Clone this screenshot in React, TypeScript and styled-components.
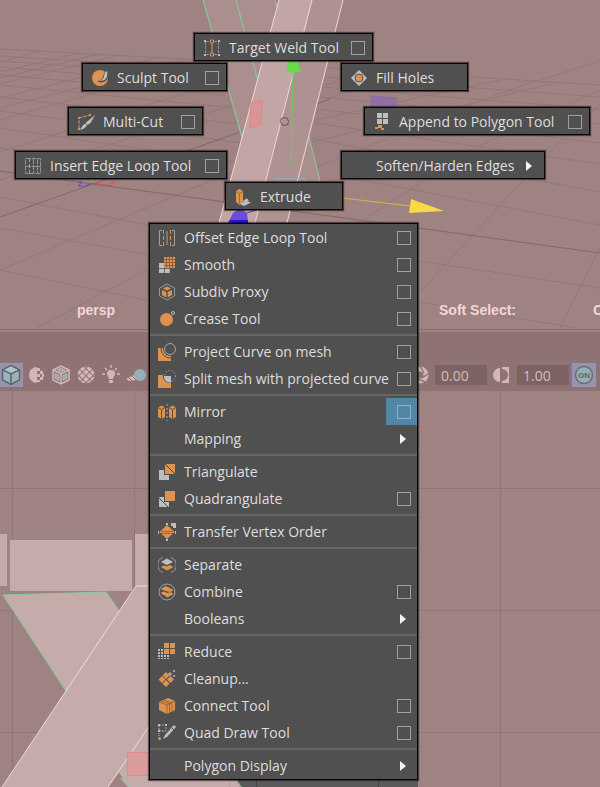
import React from "react";
import styled, { createGlobalStyle, css } from "styled-components";

const O = "#dd9350";
const G = "#bebebe";
const D = "#4f4f4f";
const PINK = "#d3b7b8";
const TEAL = "#93b0b6";
const TB = "#8f7374";

const GlobalStyle = createGlobalStyle`
  *, *::before, *::after { box-sizing: border-box; }
  body { margin: 0; background: #9f8282; font-family: "Open Sans", "Noto Sans", sans-serif; font-size: 14px; }
  button, input { font: inherit; color: inherit; }
`;

const Shell = styled.main`
  position: relative;
  display: flex;
  flex-direction: column;
  min-height: 100vh;
  overflow: hidden;
`;

const Pane = styled.section<{ $tall?: boolean }>`
  position: relative;
  display: flex;
  flex-direction: column;
  justify-content: flex-end;
  overflow: hidden;
  background: #9f8282;
  ${(p) => (p.$tall ? css`flex: 0 0 329px;` : css`flex: 1 0 396px;`)}
`;

const Scene = styled.svg`
  position: absolute;
  inset: 0;
  width: 100%;
  height: 100%;
`;

const Hud = styled.div`
  position: relative;
  display: grid;
  grid-template-columns: 362px 154px auto;
  padding: 0 0 10px 77px;
  font: bold 14px/18px "Liberation Sans", Arial, sans-serif;
  color: #f3d6d8;
  white-space: nowrap;
`;

const Toolbar = styled.header`
  flex: none;
  display: flex;
  align-items: flex-end;
  justify-content: space-between;
  height: 62px;
  padding: 0 4px 4px 0;
  background: ${TB};
  border-top: 1px solid #8a6d6e;
  box-shadow: inset 0 2px 0 #a08384;
`;

const ToolGroup = styled.div`
  display: flex;
  flex: none;
  align-items: center;
  gap: 1px;
`;

const ToolButton = styled.button<{ $on?: boolean }>`
  display: grid;
  place-items: center;
  flex: none;
  width: 24px;
  height: 24px;
  padding: 0;
  border: 0;
  background: ${(p) => (p.$on ? "#9494ae" : "transparent")};
  &:first-child { margin-left: -1px; }
`;

const Field = styled.input`
  width: 52px;
  height: 20px;
  margin: 0 2px;
  padding: 0 6px;
  border: 0;
  background: #7d6364;
  color: #d6babb;
`;

const Overlay = styled.nav`
  position: absolute;
  inset: 0;
`;

const panel = css`
  background: #505050;
  border: 1px solid #060606;
  box-shadow: 0 0 1px 1px rgba(20, 8, 8, 0.55);
  color: #dedede;
`;

const Pill = styled.div<{ $x: number; $y: number; $w: number }>`
  ${panel}
  position: absolute;
  left: ${(p) => p.$x}px;
  top: ${(p) => p.$y}px;
  width: ${(p) => p.$w}px;
  display: flex;
  height: 28px;
  padding: 1px 1px 0 0;
`;

const Menu = styled.div`
  ${panel}
  position: absolute;
  left: 149px;
  top: 223px;
  width: 269px;
`;

const Row = styled.div`
  display: flex;
  height: 27px;
`;

const Separator = styled.hr`
  height: 2px;
  margin: 2px 0;
  border: 0;
  background: #666666;
`;

const Command = styled.button`
  flex: 1;
  display: flex;
  align-items: center;
  gap: 8px;
  min-width: 0;
  padding: 0 0 0 8px;
  border: 0;
  background: transparent;
  line-height: 20px;
  text-align: left;
  white-space: nowrap;
`;

const IconSlot = styled.svg`
  flex: none;
  width: 18px;
  height: 18px;
`;

const Arrow = styled.svg`
  width: 6px;
  height: 10px;
  margin: 0 11px 0 auto;
`;

const OptionButton = styled.button<{ $active?: boolean }>`
  display: flex;
  align-items: center;
  justify-content: flex-end;
  flex: none;
  width: 31px;
  padding: 0 6px 0 0;
  border: 0;
  background: ${(p) => (p.$active ? "#5285a6" : "transparent")};
  &::before {
    content: "";
    width: 14px;
    height: 14px;
    border: 1px solid ${(p) => (p.$active ? "#8fb4cb" : "#a0a0a0")};
  }
`;

const icons: Record<string, React.ReactNode> = {
  weld: (
    <g fill="none">
      <path d="M2.500 3v12M15.500 3v12M3 2.500h12M3 15.500h12" stroke="#8f8f8f" strokeDasharray="3 1" />
      <path d="M1 1h2v2H1zM15 1h2v2h-2zM1 15h2v2H1zM15 15h2v2h-2z" fill={G} />
      <path d="M9 3v12" stroke={O} />
      <path d="M7.500 1h3v3h-3zM7.500 14h3v3h-3z" stroke={O} fill={D} />
    </g>
  ),
  sculpt: (
    <g>
      <circle cx="9" cy="9" r="8" fill={O} />
      <path d="M17 2c-4 0-4 3-5 6-1 2-3 4-6 4 4 3 9 1 11-3z" fill={D} />
      <path d="M16.500 2c-3 1-3 3-3.500 5.500-.6 2-2 3.500-4.500 4.200 4 .6 6.500-1.500 7.500-4z" fill={G} />
    </g>
  ),
  cut: (
    <g>
      <path d="M2 16V5l11-3" fill="none" stroke={O} strokeDasharray="4 1" />
      <path d="M1 4h2v2H1zM12 1h2v2h-2zM1 15h2v2H1z" fill={O} />
      <path d="M18 2l-4.500 8-3 2-2-2z" fill={G} />
      <path d="M8 10.500l2 2c-1.500 2-3.500 3.500-7 4.500 1.500-3 3-5 5-6.500z" fill={G} />
    </g>
  ),
  insertLoop: (
    <g fill="none" stroke="#929292">
      <path d="M1.500 1.500h15v15h-15zM9.500 2v14M13.500 2v14M2 9.500h15" strokeDasharray="5 1" />
      <path d="M5.500 1v16" stroke={O} strokeDasharray="4 2" />
    </g>
  ),
  fill: (
    <g>
      <path d="M9 1l8 8-8 8-8-8z" fill={G} />
      <circle cx="9" cy="9" r="4" fill={O} stroke={D} />
    </g>
  ),
  append: (
    <g>
      <path d="M4 0h5v5H4zM10 0h5v5h-5zM4 6h5v5H4zM10 6h5v5h-5z" fill={G} />
      <path d="M5 12h4v3H5zM2 14h3v2H2zM8 15h3v2H8z" fill={O} />
    </g>
  ),
  extrude: (
    <g>
      <path d="M6 16l5-3.500 6 2-7 3.500zM9 12.500l4-2 2 2-3 1z" fill={G} />
      <path d="M2 3l3.500-2L9 3v11l-3.500 3L2 14z" fill={O} />
      <path d="M2 3.500l3.500 2L9 3.500M5.500 5.500V16" fill="none" stroke="#8f623b" strokeWidth=".8" />
    </g>
  ),
  offset: (
    <g fill="none" stroke="#a2a2a2">
      <path d="M4 1.500H1.500v15H4M14 1.500h2.500v15H14M9 2v14" />
      <path d="M5.500 1v16M12.500 1v16" stroke={O} strokeDasharray="4 2" />
    </g>
  ),
  smooth: (
    <g>
      <path d="M6 1h11v11H6z" fill={O} />
      <path d="M8.500 1v11M11.500 1v11M14.500 1v11M6 3.500h11M6 6.500h11M6 9.500h11" stroke="#70502f" strokeWidth=".7" />
      <path d="M1 7h5v5H1zM1 12.800h5V17H1zM6.800 12.800h5V17h-5z" fill={G} />
    </g>
  ),
  subdiv: (
    <g>
      <path d="M9 1l7.500 4v8L9 17l-7.500-4V5z" fill="none" stroke="#999" />
      <path d="M9 3.500l4 2-4 2-4-2zM4 7l4.300 2v5.500L4 12zM14 7L9.700 9v5.500L14 12z" fill={O} />
    </g>
  ),
  crease: (
    <g>
      <circle cx="8.500" cy="9.500" r="6.500" fill={O} />
      <circle cx="15" cy="3" r="1.500" fill="none" stroke={G} />
    </g>
  ),
  project: (
    <g fill="none">
      <path d="M0 5h5a7 7 0 0 0 8 8v5H0z" fill={O} />
      <path d="M3 5c0 6 4 10 10 10M6 5a6 6 0 0 0 7 7.500" stroke={D} />
      <path d="M4.500 5c0 5 3 8.500 8.500 8.500" stroke={O} />
      <circle cx="12" cy="6" r="5.500" stroke="#a5a5a5" />
    </g>
  ),
  split: (
    <g>
      <path d="M0 5h5a7 7 0 0 0 8 8v5H0z" fill={O} />
      <path d="M6 6h7v6.500A6 6 0 0 1 6 6z" fill={G} />
      <circle cx="12" cy="6" r="5.500" fill="none" stroke={G} strokeDasharray="1 2" />
    </g>
  ),
  mirror: (
    <g>
      <path d="M0 4.500l3.500-2 3.500 2v9.500l-3.500 2L0 14zM11 4.500l3.500-2 3.500 2v9.500l-3.500 2L11 14z" fill={O} />
      <path d="M0 4.500l3.500 2 3.500-2M3.500 7v9M11 4.500l3.500 2 3.500-2M14.500 7v9" stroke="#6b4c31" fill="none" />
      <path d="M9 1v17" stroke="#aaa" strokeDasharray="2 2" />
    </g>
  ),
  tri: (
    <g>
      <path d="M1 7h5v5h5v5H1z" fill={G} />
      <path d="M7 1h10v10H7z" fill={O} />
      <path d="M7 1l10 10" stroke="#5a4029" />
    </g>
  ),
  quad: (
    <g>
      <path d="M1 7h5v5h5v5H1z" fill={G} />
      <path d="M1 8l9 9" stroke={D} />
      <path d="M7 1h10v10H7z" fill={O} />
    </g>
  ),
  transfer: (
    <g>
      <path d="M9 2l7.500 7L9 16 1.500 9z" fill={O} />
      <path d="M3 8.500h12M3 10.500h12" stroke="#8a5c37" strokeWidth=".8" />
      <path d="M8 0h2v2H8zM0 8h1v3H0zM17 8h1v3h-1zM8 16h2v2H8z" fill={G} />
      <path d="M13 0h5v5h-3V3h-2z" fill={G} />
    </g>
  ),
  separate: (
    <g>
      <path d="M5 1.500a8 8 0 0 0 0 15M13 1.500a8 8 0 0 1 0 15" fill="none" stroke="#a0a0a0" />
      <path d="M3 6l6-3.500L15 6 9 9z" fill={G} />
      <path d="M3 11l3.500-1.500L9 10.500l3-1.500 3.500 2L9 14.500z" fill={O} />
    </g>
  ),
  combine: (
    <g>
      <circle cx="9" cy="9" r="8" fill="none" stroke="#a0a0a0" />
      <path d="M2.500 6L8 3l7.500 4-3 2-5-1z" fill={O} />
      <path d="M2.500 10l3-1.500 4 1.500 3-1 3 2-6 3.500z" fill={O} />
    </g>
  ),
  reduce: (
    <g>
      <path d="M6 0h5v5H6zM12 0h5v5h-5zM6 6h5v5H6zM12 6h5v5h-5z" fill={O} />
      <path d="M0 6h5v6h6v4H0z" fill={G} />
      <path d="M2.500 6v10M5.500 11v5M8.500 11v5M0 8.500h5M0 11.500h11M0 14.500h11" stroke={D} />
    </g>
  ),
  cleanup: (
    <g>
      <path d="M8 2l3.500 3.500L8 9 4.500 5.500zM4 6l3.500 3.500L4 13 .5 9.500zM12.500 6L16 9.500 12.500 13 9 9.500zM8 10l3.500 3.500L8 17l-3.500-3.500z" fill={O} />
      <path d="M12 2v4M10 4h4M16 0v2M15 1h2M16 5v2M15 6h2" stroke={G} />
    </g>
  ),
  connect: (
    <g>
      <path d="M1 5l9-4 7 3v9l-8 4-8-4z" fill={O} />
      <path d="M1 5l8 3 8-4M9 8v9M3.500 4l8 3v9M6 3l8 3v9" fill="none" stroke="#865a36" strokeWidth=".8" />
    </g>
  ),
  draw: (
    <g>
      <path d="M1 1h7v6H1z" fill="none" stroke="#aaa" strokeDasharray="2 1" />
      <path d="M0 0h2v2H0zM7 0h2v2H7zM0 6h2v2H0z" fill={G} />
      <path d="M1 9v4" stroke={G} strokeDasharray="1 1" />
      <circle cx="1.500" cy="14.500" r="1.500" fill={O} />
      <path d="M16 1l2 2-9 10-4 2 2-4z" fill={G} />
      <path d="M13.500 3.500l2.500 2.500" stroke={D} />
    </g>
  ),
};

function Icon({ name }: { name?: string }) {
  return (
    <IconSlot viewBox="0 0 18 18" aria-hidden="true">
      {name ? icons[name] : null}
    </IconSlot>
  );
}

type Item = { label: string; icon?: string; option?: boolean; submenu?: boolean; active?: boolean };

function Entry({ item }: { item: Item }) {
  return (
    <>
      <Command type="button">
        <Icon name={item.icon} />
        {item.label}
        {item.submenu && (
          <Arrow viewBox="0 0 6 10" aria-hidden="true">
            <path d="M0 0l6 5-6 5z" fill="#f4f4f4" />
          </Arrow>
        )}
      </Command>
      {item.option && <OptionButton type="button" $active={item.active} aria-label={`${item.label} options`} />}
    </>
  );
}

const radial: (Item & { x: number; y: number; w: number })[] = [
  { label: "Target Weld Tool", icon: "weld", option: true, x: 194, y: 33, w: 179 },
  { label: "Sculpt Tool", icon: "sculpt", option: true, x: 82, y: 63, w: 145 },
  { label: "Fill Holes", icon: "fill", x: 341, y: 63, w: 127 },
  { label: "Multi-Cut", icon: "cut", option: true, x: 68, y: 107, w: 135 },
  { label: "Append to Polygon Tool", icon: "append", option: true, x: 364, y: 107, w: 226 },
  { label: "Insert Edge Loop Tool", icon: "insertLoop", option: true, x: 15, y: 151, w: 212 },
  { label: "Soften/Harden Edges", submenu: true, x: 341, y: 151, w: 204 },
  { label: "Extrude", icon: "extrude", x: 225, y: 182, w: 118 },
];

const groups: Item[][] = [
  [
    { label: "Offset Edge Loop Tool", icon: "offset", option: true },
    { label: "Smooth", icon: "smooth", option: true },
    { label: "Subdiv Proxy", icon: "subdiv", option: true },
    { label: "Crease Tool", icon: "crease", option: true },
  ],
  [
    { label: "Project Curve on mesh", icon: "project", option: true },
    { label: "Split mesh with projected curve", icon: "split", option: true },
  ],
  [
    { label: "Mirror", icon: "mirror", option: true, active: true },
    { label: "Mapping", submenu: true },
  ],
  [
    { label: "Triangulate", icon: "tri" },
    { label: "Quadrangulate", icon: "quad", option: true },
  ],
  [{ label: "Transfer Vertex Order", icon: "transfer" }],
  [
    { label: "Separate", icon: "separate" },
    { label: "Combine", icon: "combine", option: true },
    { label: "Booleans", submenu: true },
  ],
  [
    { label: "Reduce", icon: "reduce", option: true },
    { label: "Cleanup...", icon: "cleanup" },
    { label: "Connect Tool", icon: "connect", option: true },
    { label: "Quad Draw Tool", icon: "draw", option: true },
  ],
  [{ label: "Polygon Display", submenu: true }],
];

function PerspectiveScene() {
  return (
    <Scene aria-hidden="true">
      <g fill="none" stroke="#947778" strokeWidth="1">
        <path d="M0 49L200 60M0 56L210 69M0 61L210 76M0 67L215 85M0 75L225 95M0 85L235 108M0 97L240 124M0 111L242 143M0 128L238 163M0 148L236 182M0 197L148 225M0 228L150 255M0 270L150 301" />
        <path d="M0 62L40 51M0 72L80 53M0 84L120 55M0 98L160 57M0 120L200 63M0 152L220 82M0 180L235 104M0 270L165 200L236 170M37 328L148 269M0 78L100 54M0 108L190 59" />
        <path d="M327 68L600 85M325 77L600 97M322 87L600 109M320 97L600 124M317 109L600 143M315 123L600 164M312 139L600 192M345 177L600 225M419 261L600 288M419 302L577 328" />
        <path d="M318 103L400 71M316 120L500 80M312 142L555 83M310 170L500 93L600 61M363 220L470 150L600 90M419 293L505 200L570 132L600 105M560 328L600 247M325 85L380 70" />
      </g>
      <path d="M0 171L92 184L300 212L418 228L600 253M0 217L240 132L330 99" fill="none" stroke="#846768" strokeWidth="1" />
      <path d="M203 0H276L320 181H253z" fill="#ab8f8f" />
      <path d="M279 0H312L255 223H219z" fill="#c2a6a6" />
      <path d="M312 0H343L287 223H255z" fill="#ae9292" />
      <path d="M203 0L242 137M236 0L258 81M275 0L277 8M309 137L320 181" fill="none" stroke="#82cf9d" />
      <path d="M279 0L219 223M312 0L255 223M343 0L287 223" fill="none" stroke="#f0d8d8" />
      <path d="M251 103L262 100L261 124L250 128z" fill="#d99595" stroke="#e98181" />
      <circle cx="284.500" cy="121.500" r="4" fill="none" stroke="#644d4e" />
      <path d="M293 72L291 165" stroke="#6fca50" />
      <path d="M289 61H297L301 71Q293 74 286 71z" fill="#61dd48" />
      <path d="M276.500 182V178.500H304.500V182" fill="none" stroke="#99a8b5" />
      <path d="M247 213L256 210" stroke="#5243cf" />
      <path d="M228 223L233 213Q240 206 247 213L248 223z" fill="#6a4fd6" />
      <path d="M228 223L230 220H248V223z" fill="#2a10e8" />
      <path d="M343 198L410 206" stroke="#d5b54b" />
      <path d="M411 199L444 211L409 213z" fill="#f6d945" />
      <path d="M371 96L396 98V110H371z" fill="#8f709f" stroke="#8a68b0" />
      <path d="M92 183L113 186" stroke="#e04a50" />
      <path d="M92 183L83 187" stroke="#5b4bd8" />
      <path d="M92 183V178" stroke="#5fd048" />
      <path d="M111 180l4 4M115 180l-4 4" stroke="#e04a50" />
      <path d="M78 182h4l-4 4h4" fill="none" stroke="#5b4bd8" />
    </Scene>
  );
}

function FrontScene() {
  return (
    <Scene aria-hidden="true">
      <path d="M12.500 0V400M134.500 0V400M500.500 0V400M0 97.500H4000M0 219.500H4000M0 341.500H4000" stroke="#927576" />
      <path d="M0 143H7V195H0zM10 149H132V200H10zM135 143H150V195H135z" fill="#c6abab" />
      <path d="M3 204L106 201L119 219L240 396H129z" fill="#c6abab" />
      <path d="M129 396L3 204L106 201L240 396" fill="none" stroke="#82cf9d" />
      <path d="M2 396L136 195H260L108 396z" fill="#c6abab" />
      <path d="M2 396L136 195H150M108 396L160 319" fill="none" stroke="#f0d8d8" />
      <path d="M127.500 361.500H155V384.500H127.500z" fill="#d99b9c" stroke="#e48889" />
      <path d="M120 387H235L242 400H131z" fill="#c6abab" />
      <path d="M235 387H418V400H243z" fill="#5b5b5b" />
      <path d="M256.500 387V400M378.500 387V400" stroke="#454545" />
      <path d="M235 387L242 397M123 387L129 396" stroke="#82cf9d" />
      <path d="M229.500 387V400" stroke="#78c860" />
    </Scene>
  );
}

export default function App() {
  return (
    <Shell>
      <GlobalStyle />
      <Pane $tall aria-label="Perspective view">
        <PerspectiveScene />
        <Hud>
          <span>persp</span>
          <span>Soft Select:</span>
          <span>Off</span>
        </Hud>
      </Pane>
      <Toolbar>
        <ToolGroup>
          <ToolButton type="button" $on aria-label="Shaded">
            <svg width="20" height="22" viewBox="0 0 20 22">
              <path d="M10 1.500l8.500 4.300v10L10 20.500l-8.500-4.700v-10z" fill="#96b5ba" stroke="#665f68" strokeWidth="1.500" />
              <path d="M10 2.500l7 3.400-7 3.300-7-3.300z" fill="#abc5c8" />
              <path d="M1.500 5.800L10 10l8.500-4.200M10 10v10.500" fill="none" stroke="#665f68" strokeWidth="1.500" />
            </svg>
          </ToolButton>
          <ToolButton type="button" aria-label="Default material">
            <svg width="18" height="18" viewBox="0 0 18 18">
              <path d="M10 1a8 8 0 1 0 0 16z" fill={PINK} />
              <path d="M10 2h3v3h-3zM13 5h3v3h-3zM10 8h3v3h-3zM15 8h2v3h-2zM13 11h3v3h-3zM10 14h3v2h-3z" fill={PINK} />
            </svg>
          </ToolButton>
          <ToolButton type="button" aria-label="Wireframe on shaded">
            <svg width="20" height="20" viewBox="0 0 20 20">
              <path d="M10 1l8 4v10l-8 4-8-4V5z" fill="none" stroke={PINK} strokeWidth="1.500" />
              <path d="M2 5l8 4 8-4M10 9v10" fill="none" stroke={PINK} strokeWidth="1.500" />
              <path d="M10 3l4 2-4 2-4-2zM4 8.500l4 2v5l-4-2zM16 8.500l-4 2v5l4-2z" fill={TEAL} stroke={PINK} strokeWidth=".7" />
            </svg>
          </ToolButton>
          <ToolButton type="button" aria-label="Textured">
            <svg width="18" height="18" viewBox="0 0 18 18">
              <defs>
                <pattern id="check" width="5" height="5" patternUnits="userSpaceOnUse" patternTransform="rotate(45 9 9)">
                  <path d="M0 0h4v4H0z" fill={PINK} />
                </pattern>
              </defs>
              <circle cx="9" cy="9" r="8.500" fill="url(#check)" />
            </svg>
          </ToolButton>
          <ToolButton type="button" aria-label="Use all lights">
            <svg width="18" height="20" viewBox="0 0 18 20">
              <path d="M9 5a4 4 0 0 1 4 4c0 2-2 3-2 5H7c0-2-2-3-2-5a4 4 0 0 1 4-4zM7 15h4v2l-1 1H8l-1-1z" fill={PINK} />
              <path d="M9 0v3M3 3l2 2M15 3l-2 2M0 9h3M15 9h3" stroke={PINK} strokeWidth="1.500" />
            </svg>
          </ToolButton>
          <ToolButton type="button" aria-label="Shadows">
            <svg width="22" height="18" viewBox="0 0 22 18">
              <path d="M1 13l8-4 3 5-8 1z" fill={PINK} />
              <path d="M3 11l4 4M6 9l5 5" stroke={TB} />
              <circle cx="15" cy="9" r="6" fill={TEAL} />
            </svg>
          </ToolButton>
        </ToolGroup>
        <ToolGroup>
          <ToolButton type="button" aria-label="Exposure">
            <svg width="18" height="18" viewBox="0 0 18 18">
              <circle cx="9" cy="9" r="6" fill="none" stroke={PINK} strokeWidth="5" />
              <path d="M9 0l4 7M18 7l-7 5M14 16l-7-3M5 17l0-8M0 6l8 0" stroke={TB} strokeWidth="1.500" />
            </svg>
          </ToolButton>
          <Field aria-label="Exposure value" defaultValue="0.00" />
          <ToolButton type="button" aria-label="Gamma">
            <svg width="18" height="18" viewBox="0 0 18 18">
              <path d="M7 2a7 7 0 0 0 0 14zM9 1h7v16H9v-2a6 6 0 0 0 0-12z" fill={PINK} />
            </svg>
          </ToolButton>
          <Field aria-label="Gamma value" defaultValue="1.00" />
          <ToolButton type="button" $on aria-label="Color management on">
            <svg width="20" height="20" viewBox="0 0 20 20">
              <circle cx="10" cy="10" r="8.500" fill={TEAL} stroke="#6f6b73" strokeWidth="1.500" />
              <text x="10" y="13" textAnchor="middle" fontFamily="Liberation Sans, sans-serif" fontWeight="bold" fontSize="8" fill="#66616a">
                ON
              </text>
            </svg>
          </ToolButton>
        </ToolGroup>
      </Toolbar>
      <Pane aria-label="Front view">
        <FrontScene />
      </Pane>
      <Overlay aria-label="Polygon tools">
        {radial.map((item) => (
          <Pill key={item.label} $x={item.x} $y={item.y} $w={item.w}>
            <Entry item={item} />
          </Pill>
        ))}
        <Menu>
          {groups.map((group, i) => (
            <React.Fragment key={group[0].label}>
              {i > 0 && <Separator />}
              {group.map((item) => (
                <Row key={item.label}>
                  <Entry item={item} />
                </Row>
              ))}
            </React.Fragment>
          ))}
        </Menu>
      </Overlay>
    </Shell>
  );
}
